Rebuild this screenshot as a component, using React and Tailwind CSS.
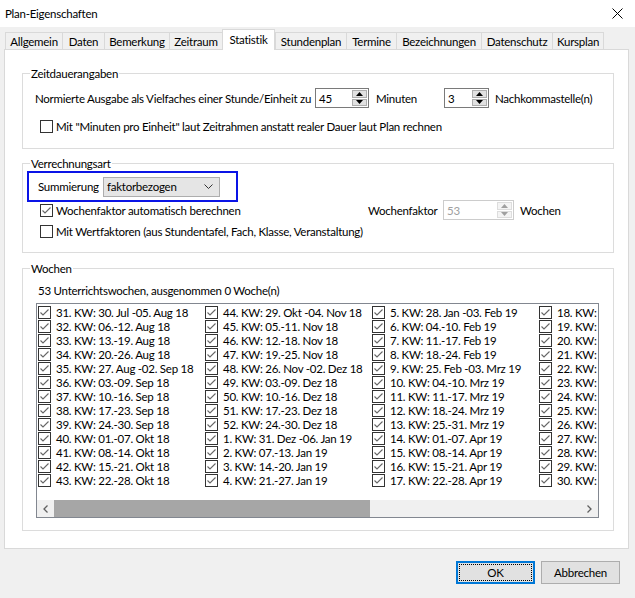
import React from "react";

const weeks = [
    ["31. KW: 30. Jul -05. Aug 18", "32. KW: 06.-12. Aug 18", "33. KW: 13.-19. Aug 18", "34. KW: 20.-26. Aug 18", "35. KW: 27. Aug -02. Sep 18", "36. KW: 03.-09. Sep 18", "37. KW: 10.-16. Sep 18", "38. KW: 17.-23. Sep 18", "39. KW: 24.-30. Sep 18", "40. KW: 01.-07. Okt 18", "41. KW: 08.-14. Okt 18", "42. KW: 15.-21. Okt 18", "43. KW: 22.-28. Okt 18"],
    ["44. KW: 29. Okt -04. Nov 18", "45. KW: 05.-11. Nov 18", "46. KW: 12.-18. Nov 18", "47. KW: 19.-25. Nov 18", "48. KW: 26. Nov -02. Dez 18", "49. KW: 03.-09. Dez 18", "50. KW: 10.-16. Dez 18", "51. KW: 17.-23. Dez 18", "52. KW: 24.-30. Dez 18", "1. KW: 31. Dez -06. Jan 19", "2. KW: 07.-13. Jan 19", "3. KW: 14.-20. Jan 19", "4. KW: 21.-27. Jan 19"],
    ["5. KW: 28. Jan -03. Feb 19", "6. KW: 04.-10. Feb 19", "7. KW: 11.-17. Feb 19", "8. KW: 18.-24. Feb 19", "9. KW: 25. Feb -03. Mrz 19", "10. KW: 04.-10. Mrz 19", "11. KW: 11.-17. Mrz 19", "12. KW: 18.-24. Mrz 19", "13. KW: 25.-31. Mrz 19", "14. KW: 01.-07. Apr 19", "15. KW: 08.-14. Apr 19", "16. KW: 15.-21. Apr 19", "17. KW: 22.-28. Apr 19"],
    ["18. KW: 29. Apr -05. Mai 19", "19. KW: 06.-12. Mai 19", "20. KW: 13.-19. Mai 19", "21. KW: 20.-26. Mai 19", "22. KW: 27. Mai -02. Jun 19", "23. KW: 03.-09. Jun 19", "24. KW: 10.-16. Jun 19", "25. KW: 17.-23. Jun 19", "26. KW: 24.-30. Jun 19", "27. KW: 01.-07. Jul 19", "28. KW: 08.-14. Jul 19", "29. KW: 15.-21. Jul 19", "30. KW: 22.-28. Jul 19"],
];

const tabs = [
    ["Allgemein", "w-[57px]"],
    ["Daten", "w-[42px]"],
    ["Bemerkung", "w-[65px]"],
    ["Zeitraum", "w-[53px]"],
    ["Statistik", "w-[53px]"],
    ["Stundenplan", "w-[71px]"],
    ["Termine", "w-[50px]"],
    ["Bezeichnungen", "w-[85px]"],
    ["Datenschutz", "w-[71px]"],
    ["Kursplan", "w-[52px]"],
];

function Check({checked}) {
    return (
        <span className="w-[13px] h-[13px] border border-[#333333] bg-white shrink-0 flex items-center justify-center">
            {checked && (
                <svg width="11" height="11" viewBox="0 0 11 11">
                    <path d="M1.5 5.5 L4 8 L9.5 2.5" fill="none" stroke="#666" strokeWidth="1.1"/>
                </svg>
            )}
        </span>
    );
}

function Spin({value, width, disabled}) {
    const arrow = disabled ? "#a0a0a0" : "#000";
    return (
        <div className={`flex h-[20px] border bg-white shrink-0 ${width} ${disabled ? "border-[#cccccc] text-[#a0a0a0]" : "border-[#7a7a7a]"}`}>
            <span className="flex-1 pl-[3px] flex items-center">{value}</span>
            <div className="w-[17px] flex flex-col p-px gap-px">
                <span className={`flex-1 flex items-center justify-center border ${disabled ? "border-[#dddddd] bg-[#f4f4f4]" : "border-[#adadad] bg-[#e1e1e1]"}`}>
                    <svg width="7" height="4" viewBox="0 0 7 4"><path d="M0 4 L3.5 0 L7 4 Z" fill={arrow}/></svg>
                </span>
                <span className={`flex-1 flex items-center justify-center border ${disabled ? "border-[#dddddd] bg-[#f4f4f4]" : "border-[#adadad] bg-[#e1e1e1]"}`}>
                    <svg width="7" height="4" viewBox="0 0 7 4"><path d="M0 0 L3.5 4 L7 0 Z" fill={arrow}/></svg>
                </span>
            </div>
        </div>
    );
}

function Group({title, height, children}) {
    return (
        <div className={`relative ml-[17px] w-[592px] border border-[#dcdcdc] ${height}`}>
            <span className="absolute -top-[8px] left-[7px] bg-white px-px leading-[15px]">{title}</span>
            {children}
        </div>
    );
}

export default function App() {
    return (
        <div className="w-[635px] h-[598px] bg-[#f0f0f0] text-[11.5px] tracking-[-0.25px] leading-[15px] text-black font-['Lato',sans-serif] overflow-hidden">
            {/* title bar */}
            <div className="h-[27px] bg-white flex items-center justify-between pl-[5px] pr-[12px]">
                <span>Plan-Eigenschaften</span>
                <svg width="11" height="11" viewBox="0 0 11 11">
                    <path d="M0.5 0.5 L10.5 10.5 M10.5 0.5 L0.5 10.5" stroke="#000" strokeWidth="1"/>
                </svg>
            </div>

            {/* tabs */}
            <div className="h-[22px] pt-[2px] flex items-end pl-[5px]">
                {tabs.map(([name, w]) => name === "Statistik" ? (
                    <div key={name} className={`${w} h-[21px] -mb-px relative z-10 bg-white border-l border-t border-r border-[#d9d9d9] flex items-center justify-center pb-[2px]`}>
                        {name}
                    </div>
                ) : (
                    <div key={name} className={`${w} h-[17px] bg-[#f0f0f0] border-l border-t border-[#d9d9d9] last:border-r flex items-center justify-center`}>
                        {name}
                    </div>
                ))}
            </div>

            {/* panel */}
            <div className="ml-[4px] w-[625px] h-[500px] bg-white border border-[#d9d9d9] pt-[23px]">
                <Group title="Zeitdauerangaben" height="h-[76px]">
                    <div className="mt-[14px] h-[20px] flex items-center pl-[12px]">
                        <span className="w-[280px] whitespace-nowrap">Normierte Ausgabe als Vielfaches einer Stunde/Einheit zu</span>
                        <Spin value="45" width="w-[54px]"/>
                        <span className="ml-[7px] w-[68px]">Minuten</span>
                        <Spin value="3" width="w-[45px]"/>
                        <span className="ml-[6px]">Nachkommastelle(n)</span>
                    </div>
                    <div className="mt-[10px] h-[16px] flex items-center gap-[3px] pl-[17px]">
                        <Check/>
                        <span className="whitespace-nowrap">Mit "Minuten pro Einheit" laut Zeitrahmen anstatt realer Dauer laut Plan rechnen</span>
                    </div>
                </Group>

                <div className="h-[14px]"></div>

                <Group title="Verrechnungsart" height="h-[90px]">
                    <div className="mt-[7px] ml-[4px] w-[211px] h-[31px] border-2 border-[#0a14e6] flex items-center pl-[9px]">
                        <span className="w-[65px]">Summierung</span>
                        <div className="w-[117px] h-[20px] bg-[#e5e5e5] border border-[#adadad] flex items-center justify-between pl-[3px] pr-[6px]">
                            <span>faktorbezogen</span>
                            <svg width="9" height="5" viewBox="0 0 9 5"><path d="M0.5 0.5 L4.5 4.5 L8.5 0.5" fill="none" stroke="#333" strokeWidth="1"/></svg>
                        </div>
                    </div>
                    <div className="h-[16px] flex items-center pl-[17px]">
                        <div className="w-[328px] flex items-center gap-[3px]">
                            <Check checked/>
                            <span className="whitespace-nowrap">Wochenfaktor automatisch berechnen</span>
                        </div>
                        <span className="w-[75px]">Wochenfaktor</span>
                        <Spin value="53" width="w-[71px]" disabled/>
                        <span className="ml-[6px]">Wochen</span>
                    </div>
                    <div className="mt-[5px] h-[16px] flex items-center gap-[3px] pl-[17px]">
                        <Check/>
                        <span className="whitespace-nowrap">Mit Wertfaktoren (aus Stundentafel, Fach, Klasse, Veranstaltung)</span>
                    </div>
                </Group>

                <div className="h-[15px]"></div>

                <Group title="Wochen" height="h-[263px]">
                    <div className="mt-[14px] h-[15px] pl-[15px] flex items-center">53 Unterrichtswochen, ausgenommen 0 Woche(n)</div>
                    <div className="mt-[5px] ml-[13px] w-[563px] h-[215px] border border-[#828790] flex flex-col overflow-hidden">
                        <div className="flex-1 overflow-hidden flex pt-px pl-px">
                            {weeks.map((col, i) => (
                                <div key={i} className="w-[167px] shrink-0 flex flex-col">
                                    {col.map((w) => (
                                        <div key={w} className="h-[14px] flex items-center gap-[5px] whitespace-nowrap">
                                            <Check checked/>
                                            <span>{w}</span>
                                        </div>
                                    ))}
                                </div>
                            ))}
                        </div>
                        <div className="h-[17px] bg-[#f0f0f0] flex items-stretch">
                            <span className="w-[17px] flex items-center justify-center">
                                <svg width="5" height="8" viewBox="0 0 5 8"><path d="M4.5 0.5 L1 4 L4.5 7.5" fill="none" stroke="#606060" strokeWidth="1.3"/></svg>
                            </span>
                            <span className="w-[316px] bg-[#a6a6a6]"></span>
                            <span className="flex-1"></span>
                            <span className="w-[17px] flex items-center justify-center">
                                <svg width="5" height="8" viewBox="0 0 5 8"><path d="M0.5 0.5 L4 4 L0.5 7.5" fill="none" stroke="#606060" strokeWidth="1.3"/></svg>
                            </span>
                        </div>
                    </div>
                </Group>
            </div>

            {/* buttons */}
            <div className="mt-[12px] flex justify-end gap-[6px] pr-[15px]">
                <button className="w-[79px] h-[23px] bg-[#e1e1e1] border-2 border-[#0078d7] p-px">
                    <span className="w-full h-full flex items-center justify-center border border-dotted border-[#000]">OK</span>
                </button>
                <button className="w-[79px] h-[23px] bg-[#e1e1e1] border border-[#adadad] flex items-center justify-center">Abbrechen</button>
            </div>
        </div>
    );
}
